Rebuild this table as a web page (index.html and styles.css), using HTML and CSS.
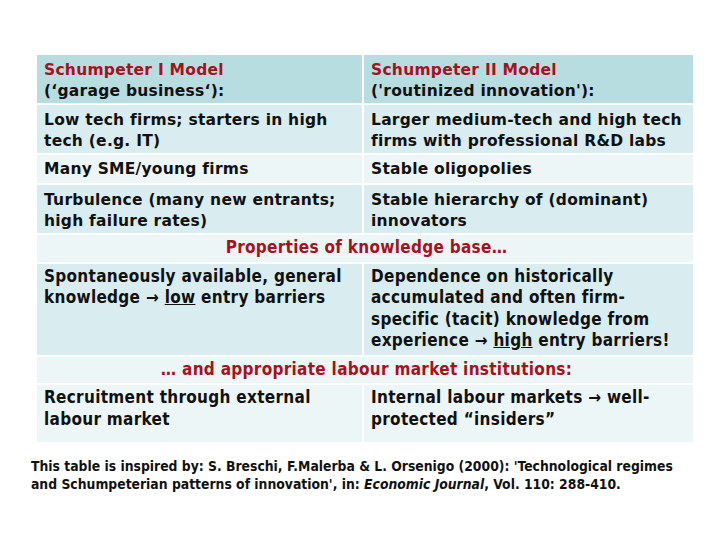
FILE: index.html
```html
<!DOCTYPE html>
<html>
<head>
<meta charset="utf-8">
<link rel="stylesheet" href="styles.css">
</head>
<body>
<div class="page">
  <div class="table">
    <div class="cell head"><span class="red">Schumpeter I Model</span><br>(‘garage business‘):</div>
    <div class="cell head"><span class="red">Schumpeter II Model</span><br>('routinized innovation'):</div>
    <div class="cell dark">Low tech firms; starters in high tech (e.g. IT)</div>
    <div class="cell dark">Larger medium-tech and high tech firms with professional R&amp;D labs</div>
    <div class="cell light">Many SME/young firms</div>
    <div class="cell light">Stable oligopolies</div>
    <div class="cell dark">Turbulence (many new entrants; high failure rates)</div>
    <div class="cell dark">Stable hierarchy of (dominant) innovators</div>
    <div class="cell light span red center t2">Properties of knowledge base…</div>
    <div class="cell dark t2">Spontaneously available, general knowledge → <u>low</u> entry barriers</div>
    <div class="cell dark t2">Dependence on historically accumulated and often firm-specific (tacit) knowledge from experience → <u>high</u> entry barriers!</div>
    <div class="cell light span red center t2">… and appropriate labour market institutions:</div>
    <div class="cell light t2 last">Recruitment through external labour market</div>
    <div class="cell light t2 last">Internal labour markets → well-protected “insiders”</div>
  </div>
  <p class="note">This table is inspired by: S. Breschi, F.Malerba &amp; L. Orsenigo (2000): 'Technological regimes and Schumpeterian patterns of innovation', in: <i>Economic Journal</i>, Vol. 110: 288-410.</p>
</div>
</body>
</html>
```
FILE: styles.css
```css
html, body {
  margin: 0;
  padding: 0;
  background: #ffffff;
}
.page {
  width: 720px;
  height: 540px;
  padding-top: 55px;
  box-sizing: border-box;
}
.table {
  margin-left: 37px;
  width: 656px;
  display: grid;
  grid-template-columns: 325px 329px;
  gap: 2px;
  font-family: "DejaVu Sans", Verdana, sans-serif;
  font-weight: bold;
  font-size: 15.5px;
  letter-spacing: 0.25px;
  line-height: 21px;
  color: #111111;
}
.cell {
  padding: 5px 4px 1px 7px;
}
.light.cell:not(.t2) {
  padding-top: 4px;
  padding-bottom: 3px;
}
.head { background: #b7dde1; }
.dark { background: #d9edf0; }
.light { background: #edf6f7; }
.span { grid-column: 1 / span 2; }
.center { text-align: center; }
.red { color: #a5121e; }
.t2 {
  font-family: "DejaVu Sans Condensed", Tahoma, sans-serif;
  font-size: 17px;
  letter-spacing: 0.3px;
  line-height: 21.5px;
  padding-top: 2px;
  padding-bottom: 3px;
}
.last { padding-bottom: 12px; }
.note {
  margin: 15px 0 0 31px;
  width: 648px;
  font-family: "DejaVu Sans Condensed", Tahoma, sans-serif;
  font-weight: bold;
  font-size: 13.8px;
  line-height: 18px;
  color: #111111;
}
```
